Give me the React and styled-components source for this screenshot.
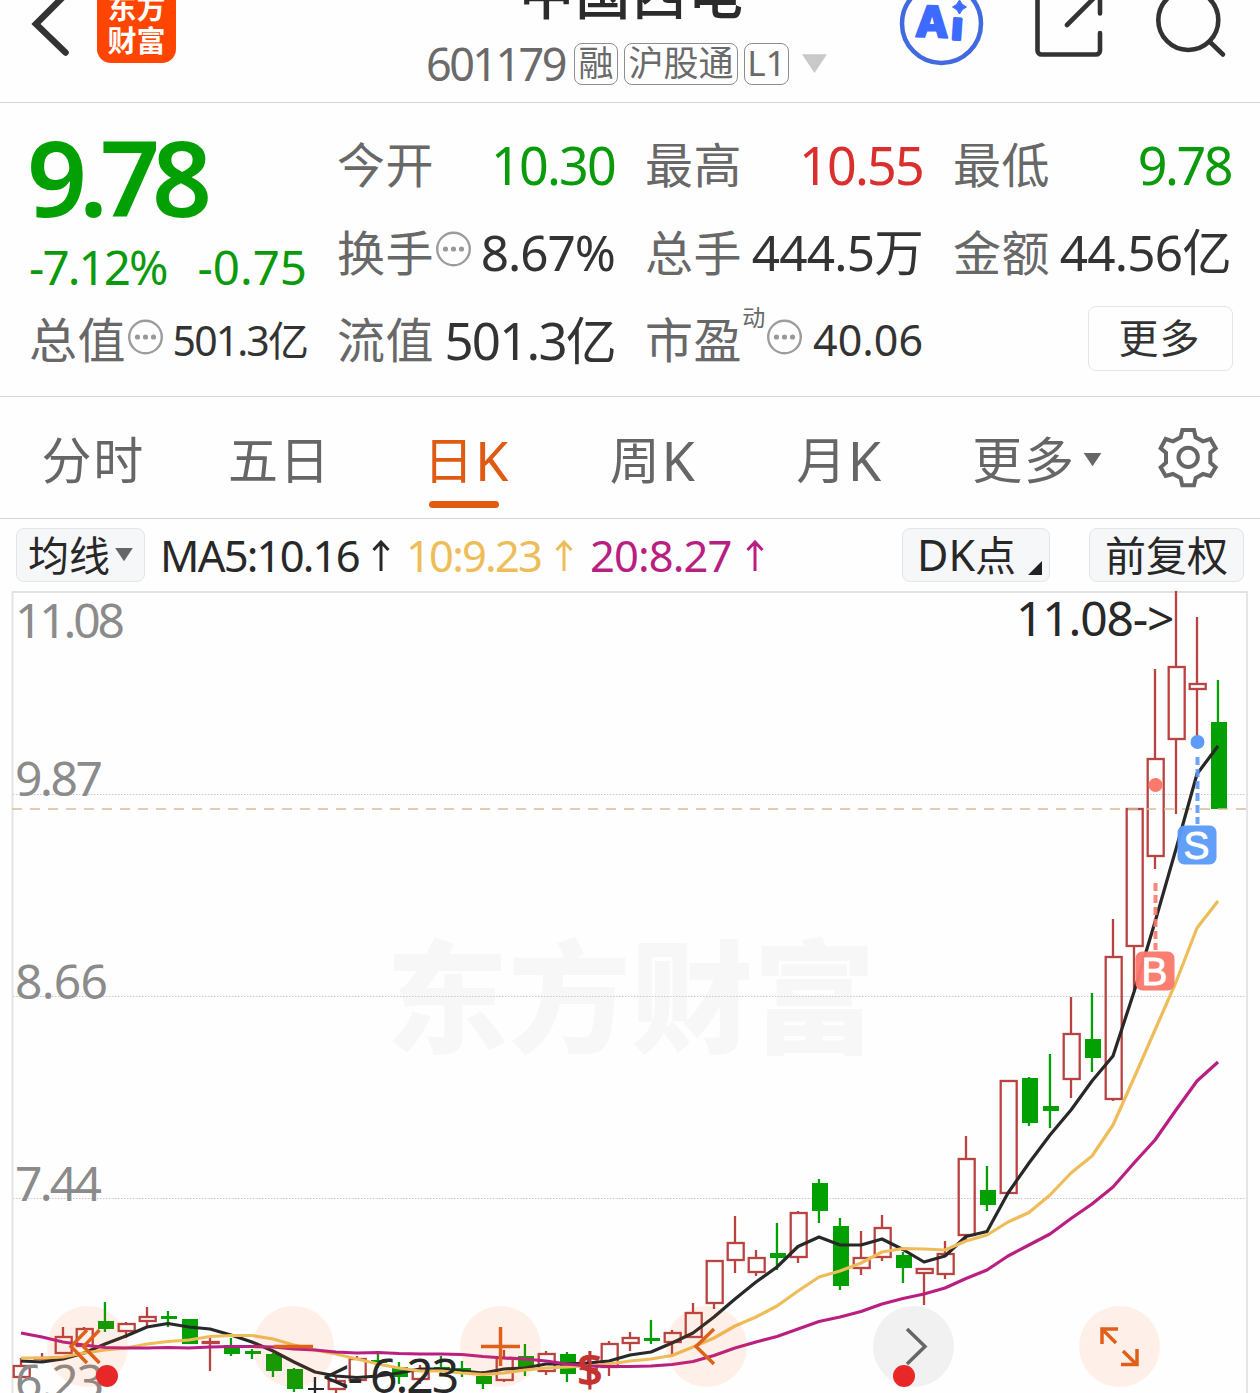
import React from "react";
import styled, { createGlobalStyle } from "styled-components";

const GlobalStyle = createGlobalStyle`
  * {
    box-sizing: border-box;
  }

  body {
    margin: 0;
    background: #fefefe;
    font-family: "Noto Sans", "Noto Sans CJK SC", sans-serif;
    line-height: 1.2;
    color: #333;
  }
`;

const GREEN = "#0b9a0b";
const RED = "#d92f2f";

const Screen = styled.div`
  width: 1260px;
  height: 1393px;
  overflow: hidden;
  display: flex;
  flex-direction: column;
  white-space: nowrap;
`;

const Header = styled.header`
  height: 103px;
  flex: none;
  display: grid;
  grid-template-columns: 420px 420px 420px;
  align-items: start;
  overflow: hidden;
  border-bottom: 1px solid #d3d8d8;
`;

const HeaderLeft = styled.div`
  height: 63px;
  display: flex;
  align-items: flex-end;
  padding-left: 28px;
  gap: 25px;
`;

const Logo = styled.div`
  width: 79px;
  height: 79px;
  flex: none;
  padding-top: 7px;
  border-radius: 14px;
  background: #ff4500;
  color: #fff;
  font-size: 29px;
  font-weight: 700;
  line-height: 33px;
  text-align: center;
`;

const Title = styled.div`
  display: flex;
  flex-direction: column;
  height: 85px;
  justify-content: flex-end;
`;

const Name = styled.div`
  padding-left: 99px;
  font-size: 55px;
  font-weight: 500;
  letter-spacing: 1.3px;
  line-height: 56px;
  color: #2b2b2b;
`;

const CodeRow = styled.div`
  display: flex;
  align-items: center;
  height: 43px;
  margin-top: 21px;
  padding-left: 6px;
  color: #6a6a6a;
`;

const Code = styled.span`
  width: 148px;
  font-size: 45px;
  line-height: 43px;
  letter-spacing: -2.6px;
`;

const Tag = styled.span`
  width: ${(p) => p.$width}px;
  height: 42px;
  margin-right: 6px;
  border: 1.5px solid #8d8d8d;
  border-radius: 8px;
  font-size: 35px;
  line-height: 38px;
  text-align: center;
`;

const Triangle = styled.i`
  width: ${(p) => p.$size}px;
  height: ${(p) => p.$size * 0.75}px;
  margin-left: ${(p) => p.$gap}px;
  background: ${(p) => p.$color};
  clip-path: polygon(0 0, 100% 0, 50% 100%);
`;

const HeaderIcons = styled.div`
  display: flex;
  justify-content: flex-end;
`;

const Quote = styled.section`
  height: 294px;
  flex: none;
  display: grid;
  grid-template-columns: repeat(4, 277px);
  grid-template-rows: repeat(3, 87.7px);
  column-gap: 31px;
  padding: 18px 0 0 30px;
  border-bottom: 1px solid #d3d8d8;
`;

const PriceBlock = styled.div`
  grid-row: span 2;
  color: ${GREEN};
`;

const Price = styled.div`
  height: 117px;
  margin-left: -3px;
  font-size: 105px;
  font-weight: 600;
  line-height: 111px;
  letter-spacing: -8px;
  color: #03a003;
`;

const Change = styled.div`
  display: flex;
  justify-content: space-between;
  margin-left: -1px;
  font-size: 47.5px;
  line-height: 58px;
`;

const Delta = styled.span`
  letter-spacing: ${(p) => p.$spacing}px;
`;

const StatCell = styled.div`
  display: flex;
  align-items: center;
`;

const Label = styled.span`
  margin-left: -1px;
  font-size: 48px;
  letter-spacing: 0.6px;
  color: #686868;
`;

const Sup = styled.sup`
  align-self: flex-start;
  padding-top: 9px;
  font-size: 23px;
  line-height: 24px;
  color: #686868;
`;

const Value = styled.span`
  margin-left: auto;
  font-size: ${(p) => p.$size || 52}px;
  letter-spacing: ${(p) => p.$spacing}px;
  color: ${(p) => p.$color || "#333"};
`;

const MoreButton = styled.button`
  width: 145px;
  height: 65px;
  margin: 10px -2px 0 auto;
  padding: 0 2px 1px 0;
  border: 1.5px solid #e4e6e6;
  border-radius: 8px;
  background: #fefefe;
  font-family: inherit;
  font-size: 40px;
  line-height: 56px;
  letter-spacing: 1px;
  color: #333;
`;

const Tabs = styled.nav`
  height: 122px;
  flex: none;
  display: flex;
  border-bottom: 1px solid #d3d8d8;
`;

const Tab = styled.div`
  position: relative;
  width: ${(p) => p.$width || 186.4}px;
  display: flex;
  align-items: center;
  justify-content: center;
  padding-top: ${(p) => (p.$icon ? 0 : 4)}px;
  font-size: 50px;
  letter-spacing: 1.6px;
  color: ${(p) => (p.$active ? "#df5a12" : "#666")};

  &::after {
    content: "";
    display: ${(p) => (p.$active ? "block" : "none")};
    position: absolute;
    bottom: 10px;
    left: 56px;
    width: 70px;
    height: 7px;
    border-radius: 4px;
    background: #e25b0f;
  }
`;

const Latin = styled.span`
  font-size: 54px;
  letter-spacing: 0;
  line-height: 50px;
`;

const Toolbar = styled.div`
  height: 72px;
  flex: none;
  display: flex;
  align-items: center;
  padding: 0 15px 0 16px;
`;

const Chip = styled.button`
  display: flex;
  align-items: center;
  justify-content: ${(p) => (p.$corner ? "flex-start" : "center")};
  width: ${(p) => p.$width}px;
  height: 54px;
  padding: 0 0 1px ${(p) => (p.$corner ? 14 : 0)}px;
  margin-left: ${(p) => p.$left || 0}px;
  border: 1.5px solid #e2e5e7;
  border-radius: 8px;
  background: #f6f7f9;
  font-family: inherit;
  font-size: 41px;
  line-height: 50px;
  color: #282828;

  ${Latin} {
    font-size: 43px;
  }
`;

const Corner = styled.i`
  align-self: flex-end;
  width: 14px;
  height: 14px;
  margin: 0 0 5px 12px;
  background: #222;
  clip-path: polygon(100% 0, 100% 100%, 0 100%);
`;

const Average = styled.div`
  display: flex;
  align-items: center;
  justify-content: space-between;
  width: ${(p) => p.$width}px;
  margin-left: ${(p) => p.$left}px;
  font-size: 43.5px;
  letter-spacing: ${(p) => p.$spacing}px;
  color: ${(p) => p.$color};
`;

const ChartArea = styled.main`
  position: relative;
  height: 802px;
  flex: none;
`;

const Controls = styled.div`
  position: absolute;
  left: 47px;
  top: 715px;
  width: 1113px;
  display: flex;
  justify-content: space-between;
`;

const RoundButton = styled.div`
  position: relative;
  width: 81px;
  height: 81px;
  border-radius: 50%;
  background: ${(p) =>
    p.$muted ? "rgba(90, 90, 90, 0.08)" : "rgba(255, 105, 20, 0.09)"};

  svg {
    display: block;
    fill: none;
    stroke: ${(p) => (p.$muted ? "#666" : "#e0601a")};
    stroke-width: 3.5;
  }
`;

const Dot = styled.i`
  position: absolute;
  left: ${(p) => p.$left}px;
  top: 59px;
  width: 22px;
  height: 22px;
  border-radius: 50%;
  background: #e82828;
`;

const BackIcon = () => (
  <svg width="44" height="63" viewBox="28 0 44 63" fill="none">
    <path d="M68-8 36 24 65.5 52.5" stroke="#333" strokeWidth="6.5" strokeLinecap="round" />
  </svg>
);

const HeaderTools = () => (
  <svg width="370" height="80" viewBox="890 0 370 80" fill="none">
    <circle cx="941.5" cy="23.5" r="39.5" stroke="#4169e0" strokeWidth="4.5" />
    <g
      fill="#3d6bff"
      stroke="#3d6bff"
      strokeWidth="2"
      strokeLinejoin="round"
      fontFamily="Inter"
      fontWeight="800"
    >
      <text x="915" y="37" fontSize="43" transform="rotate(2 930 37)">A</text>
      <text x="951" y="39.5" fontSize="38" strokeWidth="3" transform="rotate(4 957 39)">ı</text>
    </g>
    <path d="M959.5 0Q961.500 5 966.500 7 961.500 9 959.500 14 957.500 9 952.500 7 957.500 5 959.500 0Z" fill="#3d6bff" stroke="#3d6bff" />
    <g stroke="#333" strokeWidth="4.6" strokeLinecap="round" strokeLinejoin="round">
      <path d="M1037.500-10V50.500a4 4 0 0 0 4 4H1096a4 4 0 0 0 4-4V33M1100-10V13.500M1067 25 1102-10" />
      <circle cx="1188.300" cy="20" r="30" />
      <path d="M1209.500 41.500 1223 54.500" />
    </g>
  </svg>
);

const InfoSvg = styled.svg`
  margin: 0 0 7px 2px;
`;

const InfoIcon = () => (
  <InfoSvg width="36" height="36" viewBox="0 0 36 36">
    <circle cx="17.500" cy="18" r="16.300" fill="none" stroke="#9c9c9c" strokeWidth="2.400" />
    <g fill="#999">
      <circle cx="9.500" cy="18" r="2.600" />
      <circle cx="17.500" cy="18" r="2.600" />
      <circle cx="25.500" cy="18" r="2.600" />
    </g>
  </InfoSvg>
);

const GearIcon = () => (
  <svg width="61" height="61" viewBox="955 81 183 183" fill="none" stroke="#666" strokeWidth="12">
    <path d="M1028 90H1063L1068 112 1090 124 1112 117 1128 145 1112 158V188L1128 202 1112 228 1090 222 1068 234 1063 256H1028L1023 234 1000 222 978 228 963 202 979 188V158L963 145 978 117 1000 124 1023 112Z" />
    <circle cx="1045.500" cy="172" r="29" />
  </svg>
);

const UpArrow = () => (
  <svg width="18" height="31" viewBox="0 0 18 31" fill="none" stroke="currentColor" strokeWidth="3">
    <path d="M9 31V2M1.500 10 9 2 16.500 10" />
  </svg>
);

const stats = [
  { label: "今开", value: "10.30", color: GREEN, spacing: -1.8 },
  { label: "最高", value: "10.55", color: RED, spacing: -1.8 },
  { label: "最低", value: "9.78", color: GREEN, spacing: -2.5 },
  { label: "换手", value: "8.67%", info: true, size: 49.5, spacing: -1 },
  { label: "总手", value: "444.5万", size: 49.5, spacing: -0.8 },
  { label: "金额", value: "44.56亿", size: 49.5, spacing: -0.8 },
  { label: "总值", value: "501.3亿", info: true, size: 41, spacing: -1.9 },
  { label: "流值", value: "501.3亿", size: 51, spacing: -1.8 },
  { label: "市盈", value: "40.06", sup: "动", info: true, size: 43, spacing: 0 },
];

// oldest first, 21px apart: [kind, high, body top, body bottom, low]
// kind: 0 = down, 1 = up, 2 = flat
const candles = [
  [1, 1358, 1365, 1378, 1378],
  [1, 1353, 1357, 1360, 1361],
  [1, 1327, 1336, 1354, 1354],
  [1, 1327, 1328, 1347, 1349],
  [0, 1302, 1321, 1329, 1332],
  [1, 1322, 1323, 1332, 1338],
  [1, 1307, 1316, 1322, 1326],
  [0, 1311, 1316, 1319, 1327],
  [0, 1319, 1319, 1344, 1344],
  [1, 1338, 1341, 1344, 1371],
  [0, 1338, 1345, 1354, 1356],
  [0, 1349, 1351, 1354, 1359],
  [0, 1353, 1354, 1371, 1377],
  [0, 1368, 1369, 1389, 1392],
  [2, 1377, 1388, 1390, 1395],
  [1, 1376, 1380, 1390, 1395],
  [1, 1356, 1358, 1381, 1381],
  [0, 1354, 1360, 1363, 1368],
  [0, 1362, 1367, 1377, 1384],
  [1, 1365, 1369, 1380, 1384],
  [0, 1356, 1367, 1370, 1376],
  [0, 1361, 1368, 1371, 1377],
  [0, 1371, 1376, 1384, 1389],
  [1, 1350, 1357, 1381, 1382],
  [0, 1344, 1356, 1368, 1376],
  [1, 1351, 1353, 1372, 1375],
  [0, 1352, 1354, 1374, 1382],
  [1, 1357, 1362, 1370, 1385],
  [1, 1341, 1343, 1368, 1376],
  [1, 1332, 1337, 1344, 1351],
  [0, 1320, 1338, 1341, 1344],
  [1, 1330, 1332, 1343, 1356],
  [1, 1303, 1312, 1338, 1338],
  [1, 1260, 1260, 1304, 1309],
  [1, 1216, 1242, 1261, 1273],
  [1, 1250, 1257, 1273, 1276],
  [0, 1223, 1253, 1258, 1270],
  [1, 1211, 1212, 1258, 1263],
  [0, 1179, 1183, 1211, 1223],
  [0, 1218, 1226, 1286, 1290],
  [1, 1231, 1257, 1269, 1275],
  [1, 1215, 1227, 1258, 1261],
  [0, 1252, 1255, 1268, 1283],
  [1, 1268, 1268, 1274, 1305],
  [1, 1241, 1253, 1275, 1279],
  [1, 1136, 1158, 1236, 1242],
  [0, 1166, 1190, 1205, 1211],
  [1, 1080, 1080, 1194, 1194],
  [0, 1077, 1078, 1123, 1126],
  [0, 1054, 1106, 1111, 1128],
  [1, 997, 1033, 1080, 1098],
  [0, 993, 1039, 1058, 1072],
  [1, 919, 956, 1100, 1101],
  [1, 808, 808, 947, 990],
  [1, 669, 758, 857, 869],
  [1, 591, 666, 740, 814],
  [1, 617, 683, 690, 744],
  [0, 680, 722, 809, 809],
];

const averages = [
  {
    color: "#282828",
    values: [
      1361, 1362, 1359, 1353, 1344, 1336, 1327, 1323.5, 1327, 1329, 1335, 1342,
      1351, 1362, 1372, 1376, 1377.5, 1376, 1373, 1369, 1369, 1371, 1373, 1369,
      1368, 1364, 1364, 1363, 1361, 1355, 1352, 1343, 1333, 1317, 1299, 1282,
      1267, 1246.5, 1237, 1245, 1245, 1239, 1249.5, 1262, 1256, 1236.5, 1231.5,
      1193, 1163, 1135, 1110, 1081, 1056, 992, 922, 849, 774, 746,
    ],
  },
  {
    color: "#eebd5a",
    values: [
      1358, 1358, 1357, 1353, 1350, 1348, 1344, 1341.5, 1340, 1336.5, 1335.5,
      1335.5, 1339, 1345, 1350, 1354, 1359, 1364, 1368, 1371, 1371, 1373, 1374.5,
      1373, 1370, 1368, 1367, 1366, 1364, 1361, 1359, 1355.5, 1347, 1338, 1326,
      1317, 1306, 1291, 1277, 1271, 1263, 1252, 1248.5, 1249, 1250, 1241, 1235,
      1222, 1212.5, 1195, 1173, 1156, 1125, 1078, 1030, 982, 928, 901,
    ],
  },
  {
    color: "#b91f81",
    values: [
      1333, 1337, 1342, 1345, 1347.5, 1348, 1348, 1347.5, 1348, 1347, 1346.5,
      1346.5, 1347, 1349, 1350, 1352, 1353, 1352.5, 1353.5, 1354, 1354, 1354.5,
      1356.5, 1358, 1359, 1361, 1364, 1366, 1366.5, 1366.5, 1366, 1364.5, 1361.5,
      1355.5, 1348, 1342, 1336.5, 1329, 1321.5, 1317, 1311.5, 1304, 1298.5, 1294,
      1288, 1278.5, 1270, 1256, 1245, 1234, 1218.5, 1204, 1187, 1163, 1140, 1110,
      1081, 1062,
    ],
  },
];

// [price, baseline, letter spacing]
const axis = [
  ["11.08", 638, -3.2],
  ["9.87", 796, -2.4],
  ["8.66", 999, -0.8],
  ["7.44", 1201, -2.8],
  ["6.23", 1399, -2],
];

const xAt = (i) => 21 + i * 21;

const Candle = ({ index, data }) => {
  const [kind, high, top, bottom, low] = data;
  const x = xAt(index);
  if (kind === 1) {
    return (
      <g stroke="#b94340" strokeWidth="2.3" fill="none">
        <path d={`M${x} ${high}V${top}M${x} ${bottom}V${low}`} />
        <rect x={x - 7.3} y={top + 1} width="16" height={Math.max(bottom - top - 2, 1)} />
      </g>
    );
  }
  const color = kind === 0 ? "#03a003" : "#282828";
  return (
    <g fill={color}>
      <rect x={x - 1.2} y={high} width="2.3" height={low - high} />
      <rect x={x - 7} y={top} width="16" height={bottom - top} />
    </g>
  );
};

const Signal = ({ x, dotY, lineY, boxY, letter, color }) => (
  <g>
    <circle cx={x} cy={dotY} r="7" fill={color} />
    <path d={`M${x} ${lineY}v67`} stroke={color} strokeWidth="4" strokeDasharray="8 4" opacity="0.9" />
    <rect x={x - 20} y={boxY} width="39" height="39" rx="7" fill={color} opacity="0.96" />
    <text
      x={x - 1}
      y={boxY + 33}
      fill="#fff"
      stroke="#fff"
      strokeWidth="0.8"
      fontFamily="Liberation Sans"
      fontSize="39"
      textAnchor="middle"
    >
      {letter}
    </text>
  </g>
);

const Chart = () => (
  <svg width="1260" height="802" viewBox="0 591 1260 802">
    <text
      x="386"
      y="1043"
      fill="#f7f7f7"
      fontFamily="Noto Sans CJK SC"
      fontSize="122"
      fontWeight="900"
      letterSpacing="0.5"
    >
      东方财富
    </text>
    <g stroke="#c9c9c9" strokeDasharray="1.500 1.500">
      <path d="M13 794.500H1247M13 996.500H1247M13 1198.500H1247" />
    </g>
    <path d="M12.500 1393V592H1247V1393" fill="none" stroke="#e2e2e2" strokeWidth="1.800" />
    {candles.map((c, i) => (
      <Candle key={i} index={i} data={c} />
    ))}
    <path d="M12 809H1247" stroke="#d9bd97" strokeWidth="1.500" strokeDasharray="10 8" />
    {averages.map((a) => (
      <polyline
        key={a.color}
        points={a.values.map((y, i) => `${xAt(i)},${y}`).join(" ")}
        fill="none"
        stroke={a.color}
        strokeWidth="3.200"
        strokeLinejoin="round"
      />
    ))}
    <g fontSize="48" fill="#8b8b8b">
      {axis.map(([text, y, spacing]) => (
        <text key={text} x="15" y={y} letterSpacing={spacing}>
          {text}
        </text>
      ))}
    </g>
    <g fontSize="48" letterSpacing="-2" fill="#282828">
      <text x="1016" y="636" letterSpacing="-1.200">11.08-&gt;</text>
      <text x="322" y="1394">&lt;-</text>
      <text x="370" y="1393">6.23</text>
    </g>
    <text x="590" y="1387" fontSize="46" fontWeight="600" fill="#c33431" textAnchor="middle">$</text>
    <Signal x={1155.5} dotY={785} lineY={883} boxY={951.5} letter="B" color="#fa7a6c" />
    <Signal x={1197.5} dotY={742} lineY={757} boxY={825.5} letter="S" color="#5c9bf8" />
  </svg>
);

const controls = [
  { path: "M40 24 24 40.500 40 57M52.500 24 36.500 40.500 52.500 57", dot: 49 },
  { path: "M21 40.500H60" },
  { path: "M21 40.500H60M40.500 21V60" },
  { path: "M48 23 30 40.500 48 58" },
  { path: "M34 23 52 40.500 34 58", dot: 20, muted: true },
  { path: "M39 23H23V38M23 23 37 37M58 43V58.500H42M44 45 57.500 58.500" },
];

const App = () => {
  return (
    <>
      <GlobalStyle />
      <Screen>
        <Header>
          <HeaderLeft>
            <BackIcon />
            <Logo>
              东方
              <br />
              财富
            </Logo>
          </HeaderLeft>
          <Title>
            <Name>中国西电</Name>
            <CodeRow>
              <Code>601179</Code>
              <Tag $width={44}>融</Tag>
              <Tag $width={114}>沪股通</Tag>
              <Tag $width={45}>L1</Tag>
              <Triangle $size={25} $gap={7} $color="#c9c9c9" />
            </CodeRow>
          </Title>
          <HeaderIcons>
            <HeaderTools />
          </HeaderIcons>
        </Header>

        <Quote>
          <PriceBlock>
            <Price>9.78</Price>
            <Change>
              <Delta $spacing={-1.9}>-7.12%</Delta>
              <Delta $spacing={0}>-0.75</Delta>
            </Change>
          </PriceBlock>
          {stats.map((s) => (
            <StatCell key={s.label}>
              <Label>{s.label}</Label>
              {s.sup && <Sup>{s.sup}</Sup>}
              {s.info && <InfoIcon />}
              <Value $color={s.color} $size={s.size} $spacing={s.spacing}>
                {s.value}
              </Value>
            </StatCell>
          ))}
          <MoreButton>更多</MoreButton>
        </Quote>

        <Tabs>
          <Tab>分时</Tab>
          <Tab>五日</Tab>
          <Tab $active>
            日<Latin>K</Latin>
          </Tab>
          <Tab>
            周<Latin>K</Latin>
          </Tab>
          <Tab>
            月<Latin>K</Latin>
          </Tab>
          <Tab $width={210}>
            更多
            <Triangle $size={18} $gap={8} $color="#666" />
          </Tab>
          <Tab $width={94} $icon>
            <GearIcon />
          </Tab>
        </Tabs>

        <Toolbar>
          <Chip $width={129}>
            均线
            <Triangle $size={18} $gap={5} $color="#666" />
          </Chip>
          <Average $width={230} $left={15} $spacing={-1.8} $color="#282828">
            MA5:10.16 <UpArrow />
          </Average>
          <Average $width={167} $left={16} $spacing={-1.8} $color="#eebd5a">
            10:9.23 <UpArrow />
          </Average>
          <Average $width={174} $left={17} $spacing={-0.9} $color="#b91f81">
            20:8.27 <UpArrow />
          </Average>
          <Chip $width={148} $left={138} $corner>
            <Latin>DK</Latin>点
            <Corner />
          </Chip>
          <Chip $width={155} $left={39}>
            前复权
          </Chip>
        </Toolbar>

        <ChartArea>
          <Chart />
          <Controls>
            {controls.map((c) => (
              <RoundButton key={c.path} $muted={c.muted}>
                <svg width="81" height="81" viewBox="0 0 81 81">
                  <path d={c.path} />
                </svg>
                {c.dot && <Dot $left={c.dot} />}
              </RoundButton>
            ))}
          </Controls>
        </ChartArea>
      </Screen>
    </>
  );
};

export default App;
